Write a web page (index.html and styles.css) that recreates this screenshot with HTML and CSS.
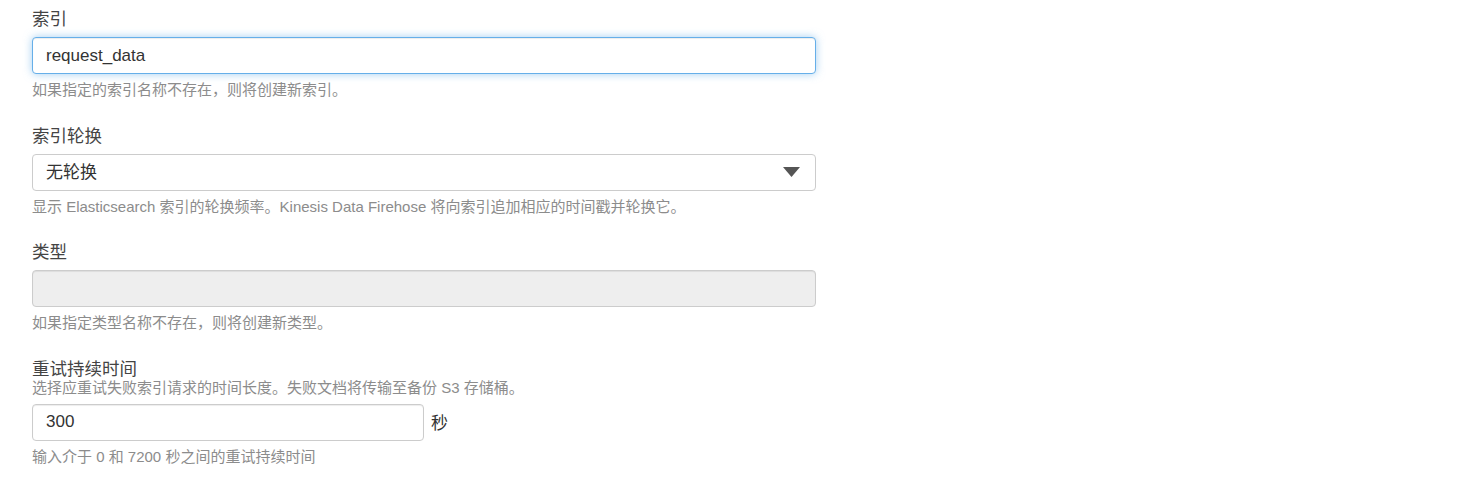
FILE: index.html
```html
<!DOCTYPE html>
<html lang="zh-CN">
<head>
<meta charset="utf-8">
<title>Elasticsearch 目标</title>
<link rel="stylesheet" href="styles.css">
</head>
<body>
<form class="form">
  <div class="group">
    <label class="label">索引</label>
    <input class="control focused" type="text" value="request_data">
    <div class="help">如果指定的索引名称不存在，则将创建新索引。</div>
  </div>
  <div class="group">
    <label class="label">索引轮换</label>
    <div class="select">
      <span class="select-value">无轮换</span>
      <svg class="caret" width="17" height="10" viewBox="0 0 17 10"><path d="M0 0 H17 L8.5 10 Z" fill="#555"/></svg>
    </div>
    <div class="help">显示 Elasticsearch 索引的轮换频率。Kinesis Data Firehose 将向索引追加相应的时间戳并轮换它。</div>
  </div>
  <div class="group">
    <label class="label">类型</label>
    <input class="control" type="text" disabled>
    <div class="help">如果指定类型名称不存在，则将创建新类型。</div>
  </div>
  <div class="group group-last">
    <label class="label">重试持续时间</label>
    <div class="desc">选择应重试失败索引请求的时间长度。失败文档将传输至备份 S3 存储桶。</div>
    <div class="inline">
      <input class="control short" type="text" value="300">
      <span class="unit">秒</span>
    </div>
    <div class="help">输入介于 0 和 7200 秒之间的重试持续时间</div>
  </div>
</form>
</body>
</html>
```

FILE: styles.css
```css
* { box-sizing: border-box; }
html, body { margin: 0; background: #fff; }
body {
  font-family: "Liberation Sans", "Noto Sans CJK SC", sans-serif;
  color: #333;
}
.form {
  padding: 7px 0 0 32px;
  width: 816px;
}
.group {
  display: flex;
  flex-direction: column;
  margin-bottom: 23.5px;
}
.group-last { margin-top: 1.5px; }
.label {
  font-size: 17.5px;
  line-height: 24px;
  color: #444;
  margin-bottom: 6px;
}
.group-last .label { margin-bottom: 0; }
.desc {
  font-size: 15px;
  line-height: 20px;
  color: #8c8c8c;
  margin-top: -3px;
  margin-bottom: 6px;
}
.control {
  display: block;
  width: 784px;
  height: 37px;
  padding: 0 13px;
  font-family: "Liberation Sans", "Noto Sans CJK SC", sans-serif;
  font-size: 17px;
  color: #333;
  background: #fff;
  border: 1px solid #ccc;
  border-radius: 4px;
  box-shadow: inset 0 1px 1px rgba(0,0,0,0.075);
  outline: none;
}
.control.focused {
  border-color: #66afe9;
  box-shadow: inset 0 1px 1px rgba(0,0,0,0.075), 0 0 8px rgba(102,175,233,0.6);
}
.control:disabled {
  background: #eee;
}
.control.short { width: 392px; }
.select {
  display: flex;
  align-items: center;
  justify-content: space-between;
  width: 784px;
  height: 37px;
  padding: 0 15px 0 13px;
  font-size: 17px;
  color: #333;
  border: 1px solid #ccc;
  border-radius: 4px;
  background: #fff;
}
.select-value { line-height: 24px; margin-top: 1px; }
.caret { display: block; }
.help {
  font-size: 15px;
  line-height: 20px;
  color: #8c8c8c;
  margin-top: 6px;
}
.inline {
  display: flex;
  align-items: center;
  gap: 7px;
}
.unit {
  font-size: 17px;
  color: #333;
  margin-top: -2px;
}
```
